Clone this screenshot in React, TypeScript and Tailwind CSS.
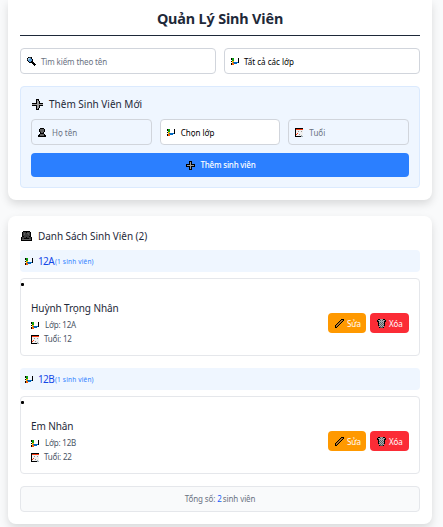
import type { ReactNode } from "react";

const palette: Record<string, string> = {
  K: "#000000",
  D: "#3c3c3c",
  M: "#5e5e5e",
  A: "#9a9a9a",
  L: "#a4b0b6",
  W: "#f0f0f0",
  B: "#5b9bd5",
  C: "#a8d4f0",
  G: "#10a010",
  Y: "#ffb900",
  O: "#f7630c",
  U: "#0067c0",
  R: "#ff3b10",
  P: "#b5762c",
};

const sprites = {
  search: [
    ".KDDK....",
    "KCCBK....",
    "DCBBBK...",
    "KBBBBK...",
    ".KBBKK...",
    "..KKKKK..",
    ".....KKK.",
    "......KKK",
    ".......K.",
  ],
  school: ["KGG....K", "KGG....K", ".GG....K", "KYY....K", ".YUUUUUK", "KOOUUU..", "KOO....."],
  plus: [
    "....KKK....",
    "....KAK....",
    "....KAAK...",
    "....KAAK...",
    "KKKKKAAKKKK",
    "AAAAAAAAAAA",
    "KKKKKAAKKKK",
    "....KAAK...",
    "....KAAK...",
    "....KAK....",
    "....KKK....",
  ],
  plusSmall: [
    "...KKK...",
    "...KAK...",
    "...KAK...",
    "KKKKAKKKK",
    "KAAAAAAAK",
    "KKKKAKKKK",
    "...KAK...",
    "...KAK...",
    "...KKK...",
  ],
  person: [
    "..KKKK..",
    ".KMMMMK.",
    ".KMMMMK.",
    ".KDMMMK.",
    "..KMMK..",
    "..KKKK..",
    ".KMMMMK.",
    "KKMMMMKK",
    "KKKKKKKK",
  ],
  people: [
    "..KKKKKKK..",
    ".KDDDKDDDK.",
    ".KDMDDMMDK.",
    ".KDMDDDMDK.",
    ".KDDDDDDDK.",
    ".KKDDDDDKK.",
    "KDDDDKDDDDK",
    "KDDKKKKKDDK",
    "KMMMMMMMMMK",
    "KKKKKKKKKKK",
  ],
  calendar: [
    "KKKKKKKK",
    "KRRRRRRR",
    "KWWWWWWW",
    "KWWAWWAW",
    "KWWWWWWW",
    "KWRWWWWW",
    "KRWWAWWW",
    "KWWWWWLW",
    "KKKKKKLL",
  ],
  pencil: [
    "......KKK",
    ".....KPPK",
    "....KPPK.",
    "...KPPK..",
    "..KPPK...",
    ".KPPK....",
    "KPPK.....",
    "KPK......",
    "KK.......",
  ],
  trash: [
    ".KKAAAKK.",
    "KALMLMLAK",
    "KKALALAKK",
    ".KLMLMLK.",
    ".KMLMLMK.",
    ".KLMLMLK.",
    ".KMLMLMK.",
    "..LMLML..",
    "..KMMMK..",
  ],
};

function Icon({ name }: { name: keyof typeof sprites }) {
  const rows = sprites[name];
  return (
    <svg width={rows[0].length} height={rows.length} shapeRendering="crispEdges" className="block shrink-0">
      {rows.flatMap((row, y) =>
        [...row].map((c, x) =>
          c === "." ? null : <rect key={`${x}-${y}`} x={x} y={y} width={1} height={1} fill={palette[c]} />,
        ),
      )}
    </svg>
  );
}

function Field({ icon, tone, children }: { icon: keyof typeof sprites; tone: string; children: ReactNode }) {
  return (
    <div className={`flex h-[26px] items-center rounded border border-gray-300 px-1.5 text-[8px] leading-3 ${tone}`}>
      <Icon name={icon} />
      <span className="mt-px">{children}</span>
    </div>
  );
}

function StudentGroup({ className, name }: { className: string; name: string }) {
  return (
    <section className="mb-3">
      <h3 className="flex h-[22px] items-center rounded bg-blue-50 pl-[5px] text-[10px] leading-3 text-blue-700">
        <Icon name="school" />
        <span className="ml-[5px] w-[15px] tracking-[-0.6px]">{className}</span>
        <span className="ml-0.5 mt-0.5 text-[6.5px] tracking-[0.17px] text-blue-500">(1 sinh viên)</span>
      </h3>
      <div className="mt-1.5 h-[78px] rounded border border-gray-200">
        <div className="flex h-[17px] pt-1">
          <span className="h-[3px] w-[3px] rounded-[1px] bg-black" />
        </div>
        <div className="flex items-start justify-between px-2.5 pt-[5px]">
          <div>
            <h4 className="text-[10px] leading-[14px] tracking-[-0.1px] text-gray-800">{name}</h4>
            <p className="mt-[3px] flex h-3.5 items-center gap-1.5 text-[8px] leading-3 tracking-[-0.2px] text-gray-600">
              <Icon name="school" />
              <span>Lớp: {className}</span>
            </p>
            <p className="flex h-3.5 items-center gap-[5px] text-[8px] leading-3 tracking-[-0.2px] text-gray-600">
              <Icon name="calendar" />
              <span>Tuổi: {className === "12A" ? 12 : 22}</span>
            </p>
          </div>
          <div className="mt-3 flex gap-1 text-[8px] leading-3 tracking-[-0.1px] text-white">
            <button className="flex h-5 w-[38px] items-center gap-[3px] rounded bg-[#ff9900] pl-[7px]">
              <Icon name="pencil" />
              <span className="mt-px">Sửa</span>
            </button>
            <button className="flex h-5 w-[39px] items-center gap-[3px] rounded bg-[#fb2c36] pl-[7px]">
              <Icon name="trash" />
              <span className="mt-px">Xóa</span>
            </button>
          </div>
        </div>
      </div>
    </section>
  );
}

export default function App() {
  return (
    <div className="h-[527px] overflow-hidden bg-gray-50 pl-2 pr-[11px] font-['Noto_Sans',sans-serif]">
      <div className="h-[200px] rounded-b-lg bg-white px-3 shadow-[0_4px_8px_rgba(0,0,0,0.13)]">
        <h1 className="h-9 border-b border-gray-800 pt-[9px] text-center text-[14.4px] font-bold leading-5 tracking-[-0.15px] text-gray-800">
          Quản Lý Sinh Viên
        </h1>
        <div className="mt-3 grid grid-cols-2 gap-2">
          <Field icon="search" tone="gap-[5px] tracking-[-0.12px] text-gray-500">Tìm kiếm theo tên</Field>
          <Field icon="school" tone="gap-[5px] bg-white text-black">Tất cả các lớp</Field>
        </div>
        <div className="mt-3 h-[102px] rounded border border-blue-100 bg-blue-50 px-2.5 pt-2.5">
          <h2 className="flex items-center gap-1.5 pl-px text-[10px] leading-[15px] text-gray-800">
            <Icon name="plus" />
            Thêm Sinh Viên Mới
          </h2>
          <div className="mt-[7px] grid grid-cols-3 gap-2">
            <Field icon="person" tone="gap-1.5 text-gray-500">Họ tên</Field>
            <Field icon="school" tone="gap-1.5 bg-white text-black">Chọn lớp</Field>
            <Field icon="calendar" tone="gap-1.5 text-gray-500">Tuổi</Field>
          </div>
          <button className="mt-2 flex h-6 w-full items-center justify-center gap-[5px] rounded bg-[#2b7fff] pl-0.5 text-[8px] font-medium leading-3 tracking-[-0.2px] text-white">
            <Icon name="plusSmall" />
            Thêm sinh viên
          </button>
        </div>
      </div>

      <div className="mt-4 h-[308px] rounded-lg bg-white px-3 pt-[13px] shadow-[0_4px_8px_rgba(0,0,0,0.13)]">
        <h2 className="mb-[7px] flex h-[14px] items-center gap-1.5 pl-px text-[10px] leading-[14px] tracking-[-0.05px] text-gray-800">
          <Icon name="people" />
          Danh Sách Sinh Viên (2)
        </h2>
        <StudentGroup className="12A" name="Huỳnh Trọng Nhân" />
        <StudentGroup className="12B" name="Em Nhân" />
        <p className="flex h-[26px] items-center justify-center rounded border border-gray-200 bg-gray-50 text-[8px] leading-3 tracking-[-0.1px] text-gray-500">
          <span>Tổng số:</span>
          <span className="ml-0.5 text-blue-600">2</span>
          <span className="ml-px">sinh viên</span>
        </p>
      </div>
    </div>
  );
}
